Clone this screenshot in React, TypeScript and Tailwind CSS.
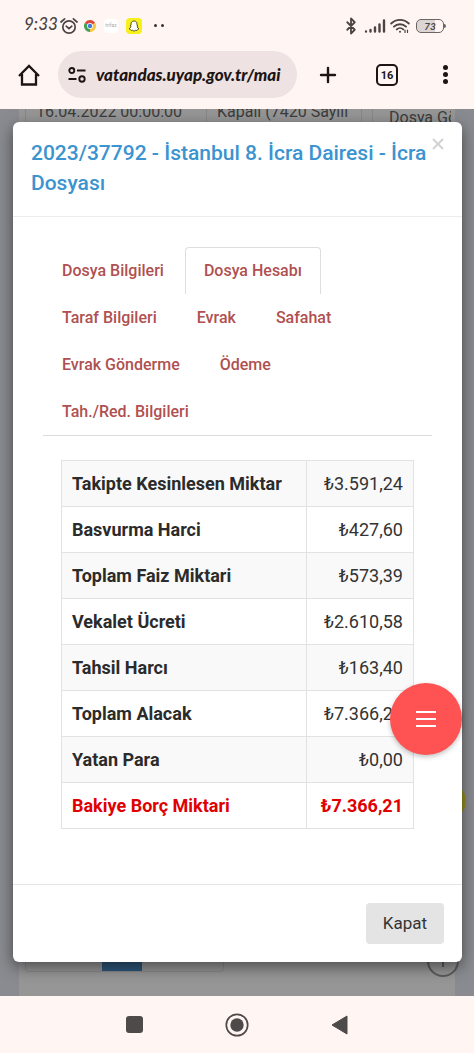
import { useState } from "react";
import { Bluetooth, Plus } from "lucide-react";

const tabs = [
  "Dosya Bilgileri",
  "Dosya Hesabı",
  "Taraf Bilgileri",
  "Evrak",
  "Safahat",
  "Evrak Gönderme",
  "Ödeme",
  "Tah./Red. Bilgileri",
];

const rows = [
  { label: "Takipte Kesinlesen Miktar", amount: "₺3.591,24" },
  { label: "Basvurma Harci", amount: "₺427,60" },
  { label: "Toplam Faiz Miktari", amount: "₺573,39" },
  { label: "Vekalet Ücreti", amount: "₺2.610,58" },
  { label: "Tahsil Harcı", amount: "₺163,40" },
  { label: "Toplam Alacak", amount: "₺7.366,21" },
  { label: "Yatan Para", amount: "₺0,00" },
  { label: "Bakiye Borç Miktari", amount: "₺7.366,21", total: true },
];

function StatusBar() {
  return (
    <div className="flex h-[51px] items-center pr-7 pl-6 text-[#4a4443]">
      <span className="w-9 pb-1 font-[Lato,sans-serif] text-[17px] font-medium whitespace-nowrap italic">
        9:33
      </span>
      <svg viewBox="0 0 18 18" className="h-[18px] w-[18px]" fill="none" stroke="currentColor" strokeWidth="1.7">
        <circle cx="9" cy="10" r="6.2" />
        <path d="M6.2 9.2 9 11.6l2.8-2.4M1 5l3.6-3.2M17 5l-3.6-3.2" strokeLinecap="round" />
      </svg>
      <svg viewBox="0 0 12 12" className="ml-1.5 h-3 w-3">
        <path d="M6 6 .8 3A6 6 0 0 1 11.2 3z" fill="#e0453a" />
        <path d="M6 6 .8 3A6 6 0 0 0 6 12z" fill="#3fa257" />
        <path d="M6 6 6 12A6 6 0 0 0 11.2 3z" fill="#f6c644" />
        <circle cx="6" cy="6" r="2.9" fill="#fff" />
        <circle cx="6" cy="6" r="2.2" fill="#4479d8" />
      </svg>
      <span className="ml-2 flex h-3.5 w-3.5 items-center justify-center rounded-sm bg-white font-[Roboto,sans-serif] text-[5px] text-[#aaa]">
        trifaz
      </span>
      <svg viewBox="0 0 16 16" className="ml-2 h-4 w-4">
        <rect width="16" height="16" rx="4" fill="#f6f01b" />
        <path
          d="M8 3c-2 0-3 1.3-3 3v1.4l-1 .4.9.9c-.2 1-1 1.7-1.9 2l1.5.9.6.8 1.4-.1L8 13.2l1.5-.9 1.4.1.6-.8 1.5-.9c-.9-.3-1.7-1-1.9-2l.9-.9-1-.4V6c0-1.7-1-3-3-3z"
          fill="#fff"
          stroke="#4a4420"
          strokeWidth=".9"
          strokeLinejoin="round"
        />
      </svg>
      <span className="ml-3 flex gap-1">
        <i className="h-[3px] w-[3px] rounded-full bg-[#333]" />
        <i className="h-[3px] w-[3px] rounded-full bg-[#333]" />
      </span>

      <div className="ml-auto flex items-center">
        <Bluetooth className="h-[18px] w-[18px]" strokeWidth={2.4} />
        <svg viewBox="0 0 22 14" className="ml-1 h-3.5 w-[22px]" stroke="currentColor" strokeWidth="2.4" strokeLinecap="round">
          <path d="M2 12.5v0M6.5 12.5V11M11 12.5V8.5M15.5 12.5V5.5M20 12.5V1.5" />
        </svg>
        <svg viewBox="0 0 20 16" className="ml-1 h-4 w-5" fill="none" stroke="currentColor" strokeWidth="1.9" strokeLinecap="round">
          <path d="M1.2 5.5a12.5 12.5 0 0 1 17.6 0M4 8.7a8.5 8.5 0 0 1 12 0M6.8 11.4a4.6 4.6 0 0 1 6.4 0" />
          <circle cx="10" cy="13.8" r="1" fill="currentColor" stroke="none" />
          <path d="M15 12v2.5M17.5 12v2.5" strokeWidth="1.2" />
        </svg>
        <span className="ml-1.5 flex h-3.5 w-7 items-center justify-center rounded-[5px] border border-[#6b6564] bg-[linear-gradient(90deg,#dcd5d3_70%,transparent_70%)] font-[Lato,sans-serif] text-[10px] leading-none font-bold italic">
          73
        </span>
        <i className="h-1 w-0.5 rounded-r bg-[#6b6564]" />
      </div>
    </div>
  );
}

function BrowserBar() {
  return (
    <div className="flex h-[58px] items-start px-[18px] text-[#1c1514]">
      <button type="button" aria-label="Ana sayfa" className="mt-[13px]">
        <svg viewBox="0 0 22 22" className="h-[22px] w-[22px]" fill="none" stroke="currentColor" strokeWidth="2.3">
          <path d="M1 12 11 2l10 10M4 10v10.5h14V10" strokeLinejoin="miter" />
        </svg>
      </button>
      <div className="ml-[18px] flex h-[47px] min-w-0 flex-1 items-center rounded-full bg-[#efe2e2] pr-2 pl-2.5">
        <svg viewBox="0 0 18 16" className="h-4 w-[18px] shrink-0" fill="none" stroke="currentColor" strokeWidth="1.9">
          <circle cx="3.8" cy="3.5" r="2.5" />
          <path d="M9 3.5h8.5M.5 12h8" />
          <circle cx="14" cy="12" r="2.7" />
        </svg>
        <input
          type="text"
          aria-label="Adres"
          readOnly
          defaultValue="vatandas.uyap.gov.tr/mai"
          className="ml-2.5 w-full min-w-0 bg-transparent font-[Lato,sans-serif] text-[17px] font-black italic outline-none"
        />
      </div>
      <button type="button" aria-label="Yeni sekme" className="mt-3 ml-[19px]">
        <Plus className="h-6 w-6" strokeWidth={2.4} />
      </button>
      <button
        type="button"
        aria-label="Sekmeler"
        className="mt-[13px] ml-9 h-[22px] w-[22px] rounded-[5px] border-2 border-current font-[Roboto,sans-serif] text-[11px] leading-none font-bold"
      >
        16
      </button>
      <button type="button" aria-label="Menü" className="mt-3.5 ml-9 flex w-[22px] flex-col items-center gap-0.5">
        <i className="h-[5px] w-[5px] rounded-full bg-current" />
        <i className="h-[5px] w-[5px] rounded-full bg-current" />
        <i className="h-[5px] w-[5px] rounded-full bg-current" />
      </button>
    </div>
  );
}

// dimmed page that stays visible around the dialog
function PageBehind() {
  return (
    <div aria-hidden="true" className="absolute inset-0 overflow-hidden bg-[#8a8b90] px-[19px]">
      <div className="flex h-full flex-col justify-between bg-[#969696]">
        <div className="flex h-10 overflow-hidden pl-1.5 text-base whitespace-nowrap text-[#3c3c3c]">
          <div className="w-[182px] border-x border-[#888] pl-2.5">
            <p className="-mt-[9px]">16.04.2022 00:00:00</p>
          </div>
          <div className="w-[155px] border-r border-[#888] pl-2.5">
            <p className="-mt-[9px]">Kapalı (7420 Sayılı</p>
          </div>
          <div className="ml-2.5 min-w-0 flex-1 overflow-hidden border-l border-[#888] pr-1 pl-4">
            <p className="-mt-[3px] overflow-hidden">Dosya Görüntüle</p>
          </div>
        </div>
        <div className="flex h-[59px] items-start pl-1.5">
          <div className="flex h-[35px] w-[199px] justify-center rounded-b border border-[#888] pr-1.5">
            <div className="h-full w-10 bg-[#2c587c]" />
          </div>
        </div>
      </div>
      <div className="absolute right-2 bottom-[177px] h-9 w-9 rounded-full bg-[#949021]" />
      <div className="absolute right-[15px] bottom-[19px] flex h-8 w-8 items-center justify-center rounded-full border-2 border-[#5c5c5c]">
        <i className="h-3 w-0.5 bg-[#5c5c5c]" />
      </div>
    </div>
  );
}

function FileDialog() {
  const [active, setActive] = useState("Dosya Hesabı");

  return (
    <div
      role="dialog"
      aria-labelledby="dialog-title"
      className="relative mr-3 ml-[13px] rounded-md bg-white shadow-[0_5px_15px_rgba(0,0,0,0.5)]"
    >
      <header className="flex items-start border-b border-[#ececec] px-[18px] pt-4 pb-[18px]">
        <h1 id="dialog-title" className="flex-1 text-[21px] leading-[30px] font-medium text-[#3b93cf]">
          2023/37792 - İstanbul 8. İcra Dairesi - İcra Dosyası
        </h1>
        <button type="button" aria-label="Pencereyi kapat" className="text-[#d0d0d0]">
          <svg viewBox="0 0 12 12" className="h-3 w-3" stroke="currentColor" strokeWidth="1.8">
            <path d="M1 1l10 10M11 1 1 11" />
          </svg>
        </button>
      </header>

      <div className="px-[30px] pt-[30px] pb-[55px]">
        <div role="tablist" className="flex flex-wrap gap-x-0.5 border-b border-[#dcdcdc]">
          {tabs.map((t) => (
            <button
              key={t}
              type="button"
              role="tab"
              aria-selected={t === active}
              onClick={() => setActive(t)}
              className={`h-[47px] rounded-t border border-b-0 px-[18px] text-base font-medium text-[#b05050] ${
                t === active ? "border-[#dedede] bg-white" : "border-transparent"
              }`}
            >
              {t}
            </button>
          ))}
        </div>

        <div className="px-[18px] pt-6">
          <table className="w-full border-collapse text-lg leading-[25px] text-[#333]">
            <tbody>
              {rows.map((r) => (
                <tr key={r.label} className={r.total ? "font-bold text-[#e00000]" : "odd:bg-[#f9f9f9]"}>
                  <th
                    scope="row"
                    className={`border border-[#e2e2e2] px-2.5 py-2.5 text-left font-bold ${r.total ? "" : "text-[#2b2b2b]"}`}
                  >
                    {r.label}
                  </th>
                  <td className="w-[107px] border border-[#e2e2e2] px-2.5 py-2.5 text-right">{r.amount}</td>
                </tr>
              ))}
            </tbody>
          </table>
        </div>
      </div>

      <footer className="flex justify-end border-t border-[#e5e5e5] px-[18px] py-[18px]">
        <button type="button" className="h-[41px] rounded bg-[#e4e4e4] px-[17px] text-[17px] text-[#333]">
          Kapat
        </button>
      </footer>
    </div>
  );
}

function NavBar() {
  return (
    <nav className="flex h-[57px] items-center justify-center gap-[82px] text-[#4d4a49]">
      <button type="button" aria-label="Son uygulamalar" className="h-[17px] w-[17px] rounded-[3px] bg-current" />
      <button type="button" aria-label="Ana ekran">
        <svg viewBox="0 0 24 24" className="h-6 w-6">
          <circle cx="12" cy="12" r="10.7" fill="none" stroke="currentColor" strokeWidth="1.7" />
          <circle cx="12" cy="12" r="6.7" fill="currentColor" />
        </svg>
      </button>
      <button type="button" aria-label="Geri">
        <svg viewBox="0 0 17 20" className="h-5 w-[17px]">
          <path d="M16 1v18L1 10z" fill="currentColor" stroke="currentColor" strokeLinejoin="round" />
        </svg>
      </button>
    </nav>
  );
}

export default function App() {
  return (
    <div className="min-h-screen bg-[#fff6f4] font-[Roboto,'Noto_Sans',sans-serif]">
      <StatusBar />
      <BrowserBar />
      <main className="relative pt-[13px] pb-[34px]">
        <PageBehind />
        <FileDialog />
        <button
          type="button"
          aria-label="Hızlı menü"
          className="absolute top-[574px] right-3 flex h-[72px] w-[72px] flex-col items-center justify-center gap-[5px] rounded-full bg-[#ff5252] shadow-[0_2px_5px_rgba(0,0,0,0.25)]"
        >
          <i className="h-0.5 w-5 bg-white" />
          <i className="h-0.5 w-5 bg-white" />
          <i className="h-0.5 w-5 bg-white" />
        </button>
      </main>
      <NavBar />
    </div>
  );
}
